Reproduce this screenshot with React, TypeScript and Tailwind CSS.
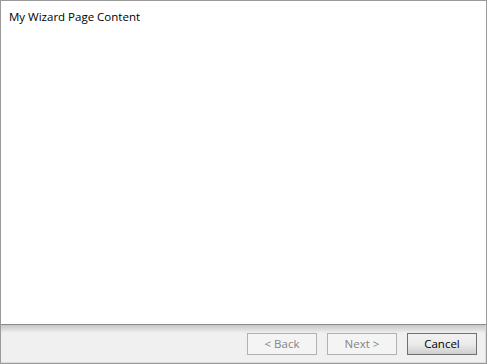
import React from 'react';

const WizardButton: React.FC<{ label: string; disabled?: boolean; primary?: boolean }> = ({ label, disabled, primary }) => {
  return (
    <button
      type="button"
      disabled={disabled}
      className={`w-[70px] h-[22px] text-[11.5px] leading-none flex items-center justify-center border ${
        disabled
          ? 'border-[#adb2b5] bg-[#f4f4f4] text-[#838383]'
          : primary
          ? 'border-[#707070] bg-gradient-to-b from-[#f2f2f2] via-[#ebebeb] to-[#cfcfcf] text-black'
          : 'border-[#707070] bg-[#eaeaea] text-black'
      }`}
    >
      {label}
    </button>
  );
};

export default function App() {
  return (
    <div
      className="w-[487px] h-[364px] flex flex-col border border-[#9a9a9a] bg-[#f0f0f0]"
      style={{ fontFamily: '"Open Sans", "Noto Sans", sans-serif' }}
    >
      <div className="flex-1 bg-white border-b border-[#8a8a8a] px-2 pt-[7px] text-[11.5px] text-black">
        My Wizard Page Content
      </div>
      <div className="h-[38px] flex flex-col bg-[#f0f0f0] border-r border-b border-[#dcdcdc]">
        <div className="h-[8px] bg-gradient-to-b from-[#c6c6c6] to-[#f0f0f0]" />
        <div className="flex justify-end items-start gap-[10px] pr-[8px]">
          <WizardButton label="< Back" disabled />
          <WizardButton label="Next >" disabled />
          <WizardButton label="Cancel" primary />
        </div>
      </div>
    </div>
  );
}
